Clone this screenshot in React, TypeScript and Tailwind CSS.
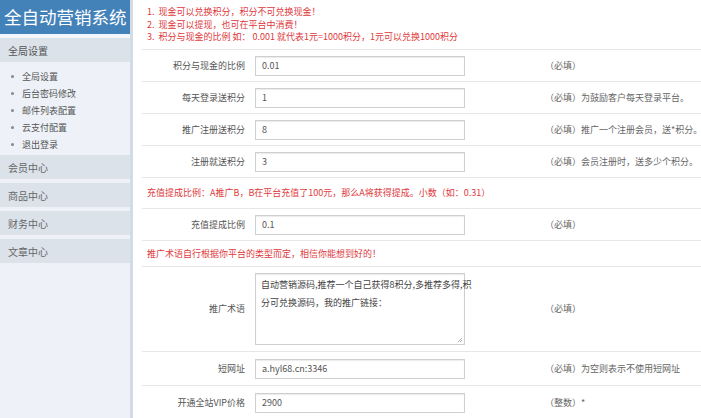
import React from "react";

const font = { fontFamily: '"Noto Sans CJK SC", "Noto Sans", sans-serif' };

type Row = { label: string; value: string; hint: string; h: string };

function InputRow({ label, value, hint, h }: Row) {
  return (
    <div className={`grid grid-cols-[108px_292px_1fr] items-center border-b border-[#e6e6e6] ${h}`}>
      <div className="pr-[5px] text-right text-[9px] text-[#555]">{label}</div>
      <div className="pl-[5px]">
        <div className="flex h-[20px] w-[210px] items-center border border-[#cfcfcf] bg-white pl-[6px] text-[9px] text-[#555] shadow-[inset_0_1px_1px_rgba(0,0,0,0.08)]">
          {value}
        </div>
      </div>
      <div className="whitespace-nowrap pl-[3px] text-[9px] text-[#666]">{hint}</div>
    </div>
  );
}

function RedRow({ text, h }: { text: string; h: string }) {
  return (
    <div className={`flex items-center border-b border-[#e6e6e6] pl-[5px] text-[9px] text-[#e0383c] ${h}`}>
      {text}
    </div>
  );
}

export default function App() {
  const subItems = ["全局设置", "后台密码修改", "邮件列表配置", "云支付配置", "退出登录"];
  const bars = ["会员中心", "商品中心", "财务中心", "文章中心"];
  return (
    <div style={font} className="flex h-[418px] w-[701px] overflow-hidden bg-white">
      {/* Sidebar */}
      <div className="flex w-[133px] shrink-0 flex-col border-r-[3px] border-[#d3dbe5] bg-[#eef2f8]">
        <div className="flex h-[34px] items-center whitespace-nowrap bg-[#4381b9] pl-[4px] text-[17.5px] leading-none text-white">
          全自动营销系统
        </div>
        <div className="h-[4px] bg-[#f3f6fa]" />
        <div className="flex h-[24px] items-center bg-[#dbe2ea] pl-[8px] text-[10px] text-[#555]">全局设置</div>
        <div className="pb-[2px] pt-[6px]">
          {subItems.map((s) => (
            <div key={s} className="flex h-[17px] items-center text-[9px] text-[#555]">
              <span className="ml-[11px] mr-[8px] h-[3px] w-[3px] rounded-full bg-[#888]" />
              {s}
            </div>
          ))}
        </div>
        <div className="flex flex-col gap-[4px]">
          {bars.map((b) => (
            <div key={b} className="flex h-[24px] items-center bg-[#dbe2ea] pl-[8px] text-[10px] text-[#666]">
              {b}
            </div>
          ))}
        </div>
      </div>

      {/* Main */}
      <div className="flex-1 pl-[9px] pr-[1px]">
        <div className="h-[50px] border-b border-[#e6e6e6] pl-[5px] pt-[6px] text-[9px] leading-[12.5px] text-[#e0383c]">
          <div>1.&nbsp;&nbsp;现金可以兑换积分，积分不可兑换现金！</div>
          <div>2.&nbsp;&nbsp;现金可以提现，也可在平台中消费！</div>
          <div>3.&nbsp;&nbsp;积分与现金的比例 如：&nbsp;0.001 就代表1元=1000积分，1元可以兑换1000积分</div>
        </div>
        <InputRow label="积分与现金的比例" value="0.01" hint="（必填）" h="h-[32px]" />
        <InputRow label="每天登录送积分" value="1" hint="（必填）为鼓励客户每天登录平台。" h="h-[32px]" />
        <InputRow label="推广注册送积分" value="8" hint="（必填）推广一个注册会员，送*积分。" h="h-[32px]" />
        <InputRow label="注册就送积分" value="3" hint="（必填）会员注册时，送多少个积分。" h="h-[32px]" />
        <RedRow text="充值提成比例：A推广B，B在平台充值了100元，那么A将获得提成。小数（如：0.31）" h="h-[31px]" />
        <InputRow label="充值提成比例" value="0.1" hint="（必填）" h="h-[32px]" />
        <RedRow text="推广术语自行根据你平台的类型而定，相信你能想到好的！" h="h-[26px]" />
        <div className="grid h-[85px] grid-cols-[108px_292px_1fr] items-center border-b border-[#e6e6e6]">
          <div className="pr-[5px] text-right text-[9px] text-[#555]">推广术语</div>
          <div className="pl-[5px]">
            <div className="relative h-[72px] w-[210px] whitespace-pre border border-[#cfcfcf] bg-white px-[5px] pt-[2px] text-[9px] leading-[18px] text-[#444] shadow-[inset_0_1px_1px_rgba(0,0,0,0.08)]">
              {"自动营销源码,推荐一个自己获得8积分,多推荐多得,积\n分可兑换源码，我的推广链接："}
              <svg className="absolute bottom-[1px] right-[1px]" width="6" height="6" viewBox="0 0 6 6">
                <path d="M5 1 L1 5 M5 3 L3 5" stroke="#999" strokeWidth="0.8" />
              </svg>
            </div>
          </div>
          <div className="whitespace-nowrap pl-[3px] text-[9px] text-[#666]">（必填）</div>
        </div>
        <InputRow label="短网址" value="a.hyl68.cn:3346" hint="（必填）为空则表示不使用短网址" h="h-[34px]" />
        <InputRow label="开通全站VIP价格" value="2900" hint="（整数）*" h="h-[34px]" />
      </div>
    </div>
  );
}
